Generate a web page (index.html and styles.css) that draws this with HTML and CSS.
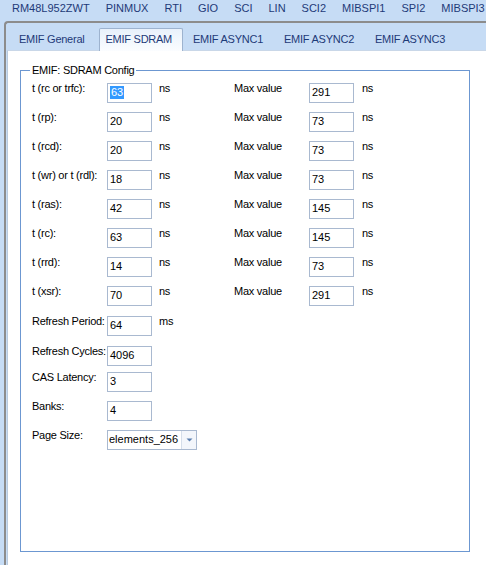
FILE: index.html
```html
<!DOCTYPE html>
<html>
<head>
<meta charset="utf-8">
<link rel="stylesheet" href="styles.css">
</head>
<body>
<div class="topbar">
  <span>RM48L952ZWT</span><span>PINMUX</span><span>RTI</span><span>GIO</span><span>SCI</span><span>LIN</span><span>SCI2</span><span>MIBSPI1</span><span>SPI2</span><span>MIBSPI3</span>
</div>
<div class="frame">
  <div class="tabs">
    <span class="tab">EMIF General</span>
    <span class="tab active">EMIF SDRAM</span>
    <span class="tab">EMIF ASYNC1</span>
    <span class="tab">EMIF ASYNC2</span>
    <span class="tab">EMIF ASYNC3</span>
  </div>
  <div class="content">
    <fieldset class="group">
      <legend>EMIF: SDRAM Config</legend>
      <div class="row"><span class="lbl">t (rc or trfc):</span><div class="box"><span class="sel">63</span></div><span class="unit">ns</span><span class="lbl2">Max value</span><div class="box">291</div><span class="unit2">ns</span></div>
      <div class="row"><span class="lbl">t (rp):</span><div class="box">20</div><span class="unit">ns</span><span class="lbl2">Max value</span><div class="box">73</div><span class="unit2">ns</span></div>
      <div class="row"><span class="lbl">t (rcd):</span><div class="box">20</div><span class="unit">ns</span><span class="lbl2">Max value</span><div class="box">73</div><span class="unit2">ns</span></div>
      <div class="row"><span class="lbl">t (wr) or t (rdl):</span><div class="box">18</div><span class="unit">ns</span><span class="lbl2">Max value</span><div class="box">73</div><span class="unit2">ns</span></div>
      <div class="row"><span class="lbl">t (ras):</span><div class="box">42</div><span class="unit">ns</span><span class="lbl2">Max value</span><div class="box">145</div><span class="unit2">ns</span></div>
      <div class="row"><span class="lbl">t (rc):</span><div class="box">63</div><span class="unit">ns</span><span class="lbl2">Max value</span><div class="box">145</div><span class="unit2">ns</span></div>
      <div class="row"><span class="lbl">t (rrd):</span><div class="box">14</div><span class="unit">ns</span><span class="lbl2">Max value</span><div class="box">73</div><span class="unit2">ns</span></div>
      <div class="row"><span class="lbl">t (xsr):</span><div class="box">70</div><span class="unit">ns</span><span class="lbl2">Max value</span><div class="box">291</div><span class="unit2">ns</span></div>
      <div class="row gap10"><span class="lbl">Refresh Period:</span><div class="box">64</div><span class="unit">ms</span></div>
      <div class="row gap10"><span class="lbl">Refresh Cycles:</span><div class="box">4096</div></div>
      <div class="row gap6"><span class="lbl">CAS Latency:</span><div class="box">3</div></div>
      <div class="row"><span class="lbl">Banks:</span><div class="box">4</div></div>
      <div class="row"><span class="lbl">Page Size:</span><div class="combo"><span class="combo-text">elements_256</span><span class="combo-btn"><svg width="7" height="4" viewBox="0 0 7 4"><path d="M0.5 0.5 L6.5 0.5 L3.5 3.5 Z" fill="#5b7fb0"/></svg></span></div></div>
    </fieldset>
  </div>
</div>
</body>
</html>
```
FILE: styles.css
```css
html, body {
  margin: 0;
  padding: 0;
}
body {
  width: 486px;
  height: 565px;
  overflow: hidden;
  background: #c6dcf5;
  font-family: "Liberation Sans", Arial, sans-serif;
  font-size: 11px;
  color: #000;
}
.topbar {
  height: 21px;
  box-sizing: border-box;
  padding: 2px 0 0 12px;
  display: flex;
  gap: 16px;
  line-height: 13px;
  color: #1e3a78;
  white-space: nowrap;
  overflow: hidden;
}
.frame {
  height: 544px;
  margin-left: 4px;
  border-top: 2px solid #8c8c8c;
  border-left: 2px solid #8c8c8c;
  border-top-left-radius: 4px;
  display: flex;
  flex-direction: column;
}
.tabs {
  height: 27px;
  box-sizing: border-box;
  padding: 5px 0 0 2.5px;
  display: flex;
  color: #1e3a78;
  white-space: nowrap;
  letter-spacing: -0.25px;
}
.tab {
  height: 22px;
  box-sizing: border-box;
  padding: 4px 9.5px 0 9.5px;
  line-height: 13px;
  border: 1px solid transparent;
  border-bottom: none;
}
.tab.active {
  position: relative;
  z-index: 1;
  height: 23px;
  padding: 4px 9.5px 0 5.5px;
  margin: 0 0 -1px 4px;
  background: linear-gradient(#e8f1fb, #fbfdff);
  border-color: #9db3cf;
  border-radius: 2px 2px 0 0;
}
.content {
  flex: 1;
  margin-left: 1px;
  background: #fff;
  border-top: 1px solid #c9d7e8;
  border-left: 1px solid #b9cade;
  display: flex;
  flex-direction: column;
}
.group {
  margin: 13px 0 0 12px;
  width: 450px;
  height: 488px;
  box-sizing: border-box;
  padding: 6px 0 0 11px;
  border: 1px solid #6c97d1;
  display: flex;
  flex-direction: column;
  gap: 9px;
  min-width: 0;
}
.group legend {
  padding: 0 2px;
  margin-left: -2px;
  line-height: 13px;
  letter-spacing: -0.25px;
  color: #000;
}
.row {
  display: flex;
  height: 20px;
  align-items: flex-start;
  white-space: nowrap;
  letter-spacing: -0.25px;
}
.row.gap10 {
  margin-top: 1px;
}
.row.gap6 {
  margin-top: -3px;
}
.lbl {
  width: 75px;
  flex-shrink: 0;
  line-height: 11px;
}
.lbl2 {
  width: 75px;
  flex-shrink: 0;
  line-height: 11px;
}
.unit {
  width: 75px;
  margin-left: 7px;
  flex-shrink: 0;
  line-height: 11px;
}
.unit2 {
  margin-left: 8px;
  line-height: 11px;
}
.box {
  width: 45px;
  height: 20px;
  box-sizing: border-box;
  flex-shrink: 0;
  border: 1px solid #a9b9d0;
  padding: 2px 0 0 2px;
  line-height: 13px;
  letter-spacing: 0;
  background: #fff;
}
.sel {
  display: inline-block;
  background: #3399ff;
  color: #fff;
  padding: 0 1px;
}
.combo {
  width: 90px;
  height: 20px;
  box-sizing: border-box;
  flex-shrink: 0;
  border: 1px solid #a9b9d0;
  display: flex;
  letter-spacing: 0;
  background: #fff;
}
.combo-text {
  flex: 1;
  padding: 2px 0 0 1px;
  line-height: 13px;
}
.combo-btn {
  width: 14px;
  border-left: 1px solid #d5deea;
  background: #f3f6fb;
  display: flex;
  align-items: center;
  justify-content: center;
}
```
